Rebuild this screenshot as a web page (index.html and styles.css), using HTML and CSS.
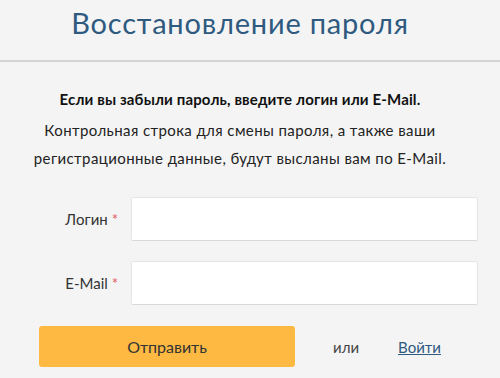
FILE: index.html
```html
<!DOCTYPE html>
<html lang="ru">

<head>
    <meta charset="UTF-8">
    <meta name="viewport" content="width=device-width, initial-scale=1.0">
    <title>Восстановление пароля</title>
    <link rel="stylesheet" href="styles.css">
</head>

<body>
    <div class="header">
        <h1>Восстановление пароля</h1>
    </div>
    <div class="container">
        <p class="lead">Если вы забыли пароль, введите логин или E-Mail.</p>
        <p class="note">Контрольная строка для смены пароля, а также ваши<br>регистрационные данные, будут высланы вам по E-Mail.</p>
        <form class="form">
            <div class="form-group">
                <label for="login">Логин <span class="req">*</span></label>
                <input type="text" id="login">
            </div>
            <div class="form-group">
                <label for="email">E-Mail <span class="req">*</span></label>
                <input type="text" id="email">
            </div>
            <div class="actions">
                <button type="button" class="btn">Отправить</button>
                <span class="or">или</span>
                <a href="#" class="login-link">Войти</a>
            </div>
        </form>
    </div>
</body>

</html>
```

FILE: styles.css
```css
body {
    margin: 0;
    font-family: "Lato", "DejaVu Sans", sans-serif;
    background-color: #f4f4f4;
    color: #222;
}

.header {
    height: 62px;
    border-bottom: 2px solid #d4d4d4;
    width: 100%;
    box-sizing: border-box;
}

.header h1 {
    width: 480px;
    margin: 0;
    padding-top: 5px;
    text-align: center;
    font-weight: normal;
    font-size: 29px;
    letter-spacing: 0.8px;
    color: #2f5a80;
}

.container {
    width: 480px;
}

.lead {
    margin: 28px 0 0;
    text-align: center;
    font-size: 15px;
    font-weight: bold;
    letter-spacing: 0.15px;
    color: #111;
}

.note {
    margin: 8px 0 0;
    text-align: center;
    font-size: 15px;
    line-height: 28px;
    letter-spacing: 0.4px;
    color: #222;
}

.form {
    margin-top: 25px;
}

.form-group {
    display: flex;
    align-items: center;
    margin-bottom: 20px;
}

.form-group label {
    width: 118px;
    text-align: right;
    margin-right: 13px;
    font-size: 15px;
    color: #333;
}

.req {
    color: #e05a5a;
}

.form-group input {
    width: 347px;
    height: 44px;
    box-sizing: border-box;
    border: 1px solid #e4e4e4;
    border-bottom-color: #d8d8d8;
    background: #fff;
    border-radius: 2px;
}

.actions {
    display: flex;
    align-items: center;
    padding-left: 39px;
    padding-top: 1px;
}

.btn {
    width: 256px;
    height: 41px;
    background: #fdb942;
    border: none;
    border-radius: 3px;
    font-family: inherit;
    font-size: 16px;
    color: #333;
}

.or {
    margin-left: 38px;
    font-size: 15px;
    color: #444;
}

.login-link {
    margin-left: 39px;
    font-size: 15px;
    color: #2f5a80;
}
```
